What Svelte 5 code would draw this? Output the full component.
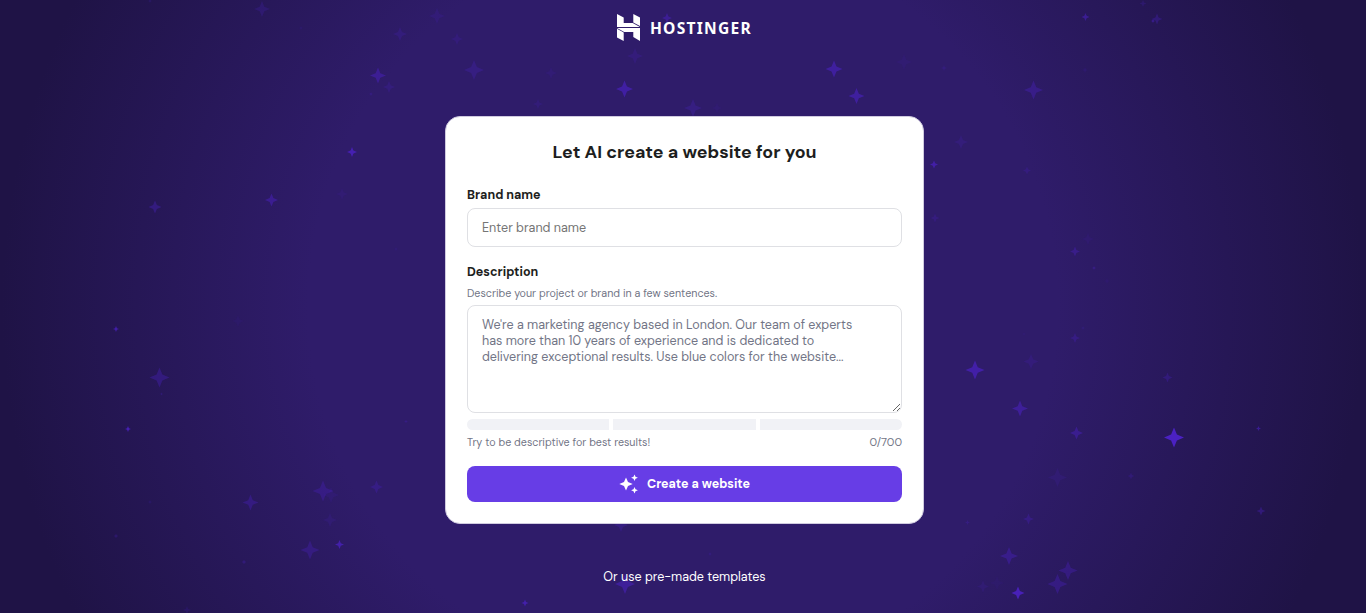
<script lang="ts">
  const maxLength = 700;

  let brand = $state('');
  let description = $state('');

  // x, y, radius, opacity
  const stars = [
    [150, 1, 2, 0.2], [262, 9, 8, 0.2], [400, 34, 7, 0.2], [437, 16, 8, 0.15],
    [378, 75.5, 8, 0.45], [389, 87, 6, 0.2], [371, 94, 2, 0.3], [352, 152, 5, 0.75],
    [271.5, 200, 6.5, 0.45], [155, 207, 6.5, 0.35], [342, 194, 6, 0.1], [301, 28, 2, 0.15],
    [396, 249, 2, 0.15], [457, 39, 6, 0.18], [474, 70, 10, 0.25], [551, 73, 6, 0.12],
    [538, 104, 5, 0.15], [635, 56, 8, 0.18], [624.5, 89, 8.5, 0.6], [693, 108, 9, 0.25],
    [667, 18, 5, 0.45], [834, 69, 8.5, 0.55], [856.5, 96, 8, 0.55], [904, 62, 8, 0.09],
    [717, 108, 5, 0.09],
    [116, 329, 3, 0.75], [159.5, 377.5, 10, 0.33], [161.5, 394, 1.5, 0.3], [128, 429, 3, 0.85],
    [238, 321, 6, 0.07], [250.5, 502.5, 8, 0.33], [323, 491, 10.5, 0.3], [331, 495, 8, 0.12],
    [330, 520, 7, 0.14], [376.5, 487, 6.5, 0.28], [310, 550, 9.5, 0.3], [339.5, 544.5, 4.5, 0.7],
    [244, 562, 2.5, 0.3], [116, 536, 2.5, 0.25], [187, 610, 4, 0.15], [406, 421.5, 2, 0.3],
    [150, 502, 2, 0.2], [525, 603, 3.5, 0.7], [621, 525, 7, 0.25], [625, 584, 10, 0.5],
    [710, 554, 2, 0.25],
    [1085.5, 17, 4, 0.5], [1143, 3.5, 3.5, 0.2], [1157, 19, 5.5, 0.3], [1153, 21, 2, 0.6],
    [1033.5, 90, 9.5, 0.35], [944, 68, 3, 0.2], [1085, 70, 3, 0.15], [961, 142, 7, 0.17],
    [934, 164.5, 4, 0.65], [1027, 170.5, 4, 0.22], [935, 218, 4.5, 0.22], [1075, 251.5, 5, 0.35],
    [1088, 239, 6, 0.1], [1094, 268, 2, 0.4], [1107, 281, 3, 0.1],
    [1075, 338, 5, 0.28], [1083, 328, 2, 0.2], [1024, 334, 2, 0.1], [1031, 361.5, 7.5, 0.18],
    [975, 370, 9.5, 0.65], [1020, 408.5, 8, 0.5], [1076.5, 433, 6.5, 0.42], [1167.5, 377.5, 5, 0.28],
    [1174, 437.5, 10, 0.95], [1258.5, 428.5, 2.5, 0.55], [1057.5, 477.5, 9.5, 0.14], [1131, 476, 3.5, 0.22],
    [1261, 511, 4.5, 0.35], [967.5, 522.5, 2.5, 0.25], [1028.5, 519, 5.5, 0.3], [1009, 556, 9, 0.38],
    [1068, 570.5, 9.5, 0.32], [1057.5, 584, 10, 0.33], [983, 586.5, 6, 0.14], [997, 583, 7, 0.07],
    [1018, 593, 6.5, 0.85]
  ];

  // four pointed sparkle centred on cx, cy
  function sparkle(cx: number, cy: number, r: number) {
    const k = r * 0.29;
    return `M${cx} ${cy - r}L${cx + k} ${cy - k}L${cx + r} ${cy}L${cx + k} ${cy + k}L${cx} ${cy + r}L${cx - k} ${cy + k}L${cx - r} ${cy}L${cx - k} ${cy - k}Z`;
  }
</script>

<div class="page">
  <svg class="stars" viewBox="0 0 1366 613" aria-hidden="true">
    {#each stars as [x, y, r, opacity]}
      <path d={sparkle(x, y, r)} {opacity} />
    {/each}
  </svg>

  <header>
    <svg class="mark" viewBox="0 0 23 27" aria-hidden="true">
      <path d="M0 13V0l6.7 3.6v5.3h9l7.2 4.1zM16.3 8.4V0L23 3.5v8.6zM16.3 23.1v-5.2H7.2L0 13.9h23V27zM0 14.8l6.7 3.7V27L0 23.4z" />
    </svg>
    <span class="wordmark">HOSTINGER</span>
  </header>

  <main class="card">
    <h1>Let AI create a website for you</h1>

    <label class="label" for="brand">Brand name</label>
    <input id="brand" type="text" placeholder="Enter brand name" bind:value={brand} />

    <label class="label second" for="description">Description</label>
    <p class="hint">Describe your project or brand in a few sentences.</p>
    <textarea
      id="description"
      maxlength={maxLength}
      placeholder={"We're a marketing agency based in London. Our team of experts\nhas more than 10 years of experience and is dedicated to\ndelivering exceptional results. Use blue colors for the website..."}
      bind:value={description}
    ></textarea>

    <div class="strength">
      <span></span>
      <span></span>
      <span></span>
    </div>
    <div class="meta">
      <span class="tip">Try to be descriptive for best results!</span>
      <span class="count">{description.length}/{maxLength}</span>
    </div>

    <button type="button">
      <svg viewBox="0 0 20 20" aria-hidden="true">
        <path d="M7 3.4l2 4.6 4.7 2-4.7 2-2 4.6L5 12 .3 10 5 8zM15.5 .4l1 2.3 2.4 1-2.4 1-1 2.3-1-2.3-2.4-1 2.4-1zM15.5 13l1 2.3 2.4 1-2.4 1-1 2.3-1-2.3-2.4-1 2.4-1z" />
      </svg>
      <span>Create a website</span>
    </button>
  </main>

  <a class="templates" href="#templates">Or use pre-made templates</a>
</div>

<style>
  :global(body) {
    margin: 0;
  }

  .page {
    position: relative;
    display: flex;
    flex-direction: column;
    align-items: center;
    height: 613px;
    padding-left: 3px;
    overflow: hidden;
    box-sizing: border-box;
    background: radial-gradient(circle at center, #2f1c6a 50%, #1f1346 91%);
    font-family: 'DM Sans', Inter, 'Liberation Sans', sans-serif;
    color: #1d1e20;
  }

  .stars {
    position: absolute;
    inset: 0;
    width: 1366px;
    height: 613px;
    fill: #4d22c8;
  }

  header {
    position: relative;
    display: flex;
    align-items: center;
    gap: 10px;
    height: 27px;
    margin: 14px 0 75px;
    color: #fff;
  }

  .mark {
    width: 23px;
    height: 27px;
    fill: #fff;
  }

  .wordmark {
    font-family: 'Noto Sans', sans-serif;
    font-size: 15.6px;
    font-weight: 700;
    line-height: 27px;
    letter-spacing: 1.25px;
    padding-top: 1px;
  }

  .card {
    position: relative;
    display: flex;
    flex-direction: column;
    width: 479px;
    height: 408px;
    padding: 22px 21px 21px;
    box-sizing: border-box;
    border: 1px solid #cfcadf;
    border-radius: 15px;
    background: #fff;
  }

  h1 {
    margin: 0;
    font-size: 17.85px;
    font-weight: 700;
    line-height: 26px;
    text-align: center;
  }

  .label {
    margin-top: 21px;
    font-size: 12.5px;
    font-weight: 700;
    line-height: 18px;
  }

  .label.second {
    margin-top: 16px;
  }

  input,
  textarea {
    display: block;
    width: 100%;
    box-sizing: border-box;
    border: 1px solid #dfe0e4;
    border-radius: 8px;
    outline: none;
    background: #fff;
    color: #1d1e20;
    font-family: inherit;
    font-size: 12.54px;
  }

  input {
    height: 39px;
    margin-top: 4px;
    padding: 1px 14px 0;
  }

  input::placeholder {
    color: #757575;
  }

  .hint {
    margin: 4px 0;
    color: #727586;
    font-size: 10.72px;
    line-height: 16px;
  }

  textarea {
    height: 108px;
    padding: 12px 14px;
    line-height: 15.8px;
    resize: vertical;
  }

  textarea::placeholder {
    color: #727586;
  }

  .strength {
    display: flex;
    gap: 4px;
    height: 11px;
    margin-top: 6px;
    overflow: hidden;
    border-radius: 6px;
  }

  .strength span {
    flex: 1;
    background: #f1f2f6;
  }

  .meta {
    display: flex;
    justify-content: space-between;
    margin: 4px 0 16px;
    color: #727586;
    font-size: 10.72px;
    line-height: 16px;
  }

  .count {
    font-size: 11.1px;
  }

  button {
    display: flex;
    align-items: center;
    justify-content: center;
    gap: 8px;
    width: 100%;
    height: 36px;
    padding: 0;
    border: 0;
    border-radius: 8px;
    background: #673de6;
    color: #fff;
    font-family: inherit;
    font-size: 12.45px;
    font-weight: 700;
    cursor: pointer;
  }

  button svg {
    width: 20px;
    height: 20px;
    fill: #fff;
  }

  .templates {
    position: relative;
    margin-top: 43px;
    color: #fff;
    font-size: 12.52px;
    line-height: 20px;
    text-decoration: none;
  }
</style>
